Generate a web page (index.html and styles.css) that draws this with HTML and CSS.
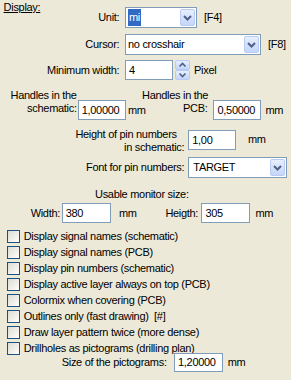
FILE: index.html
```html
<!DOCTYPE html>
<html lang="en">
<head>
    <meta charset="UTF-8">
    <meta name="viewport" content="width=device-width, initial-scale=1.0">
    <title>Display</title>
    <link rel="stylesheet" href="styles.css">
</head>
<body>
    <div class="panel">
        <div class="row row-unit">
            <div class="label label-unit">
                <span class="title">Display:</span>
                <span>Unit:</span>
            </div>
            <div class="combo combo-unit">
                <span class="combo-value"><span class="selected">mi</span></span>
                <span class="drop"><svg width="15" height="17" viewBox="0 0 15 17"><polyline points="4,7 7.5,10.5 11,7" fill="none" stroke="#4d6185" stroke-width="2"/></svg></span>
            </div>
            <span class="key">[F4]</span>
        </div>

        <div class="row row-cursor">
            <div class="label label-main">Cursor:</div>
            <div class="combo combo-cursor">
                <span class="combo-value">no crosshair</span>
                <span class="drop"><svg width="15" height="17" viewBox="0 0 15 17"><polyline points="4,7 7.5,10.5 11,7" fill="none" stroke="#4d6185" stroke-width="2"/></svg></span>
            </div>
            <span class="key">[F8]</span>
        </div>

        <div class="row row-minwidth">
            <div class="label label-main">Minimum width:</div>
            <div class="edit edit-min">4</div>
            <div class="spinner">
                <span class="spin"><svg width="15" height="10" viewBox="0 0 15 10"><polyline points="4.5,6.5 7.5,3.5 10.5,6.5" fill="none" stroke="#4d6185" stroke-width="1.6"/></svg></span>
                <span class="spin"><svg width="15" height="10" viewBox="0 0 15 10"><polyline points="4.5,3.5 7.5,6.5 10.5,3.5" fill="none" stroke="#4d6185" stroke-width="1.6"/></svg></span>
            </div>
            <span class="pixel">Pixel</span>
        </div>

        <div class="row row-handles">
            <div class="label handles-sch">
                <div>Handles in the</div>
                <div>schematic:</div>
            </div>
            <div class="field">
                <div class="edit edit-num">1,00000</div>
                <span class="mm mm-sch">mm</span>
            </div>
            <div class="label handles-pcb">
                <div>Handles in the</div>
                <div class="pcb">PCB:</div>
            </div>
            <div class="field">
                <div class="edit edit-num">0,50000</div>
                <span class="mm mm-pcb">mm</span>
            </div>
        </div>

        <div class="row row-pinheight">
            <div class="label label-pin">
                <div class="pin-line1">Height of pin numbers</div>
                <div class="pin-line2">in schematic:</div>
            </div>
            <div class="edit edit-pin">1,00</div>
            <span class="mm mm-pin">mm</span>
        </div>

        <div class="row row-font">
            <div class="label label-font">Font for pin numbers:</div>
            <div class="combo combo-font">
                <span class="combo-value">TARGET</span>
                <span class="drop"><svg width="15" height="17" viewBox="0 0 15 17"><polyline points="4,7 7.5,10.5 11,7" fill="none" stroke="#4d6185" stroke-width="2"/></svg></span>
            </div>
        </div>

        <div class="monitor-title">Usable monitor size:</div>

        <div class="row row-monitor">
            <div class="label label-width">Width:</div>
            <div class="edit edit-mon">380</div>
            <span class="mm mm-width">mm</span>
            <span class="label-height">Heigth:</span>
            <div class="edit edit-mon">305</div>
            <span class="mm mm-height">mm</span>
        </div>

        <ul class="checks">
            <li><span class="check"></span>Display signal names (schematic)</li>
            <li><span class="check"></span>Display signal names (PCB)</li>
            <li><span class="check"></span>Display pin numbers (schematic)</li>
            <li><span class="check"></span>Display active layer always on top (PCB)</li>
            <li><span class="check"></span>Colormix when covering (PCB)</li>
            <li><span class="check"></span>Outlines only (fast drawing)&nbsp; [#]</li>
            <li><span class="check"></span>Draw layer pattern twice (more dense)</li>
            <li><span class="check"></span>Drillholes as pictograms (drilling plan)</li>
        </ul>

        <div class="row row-picto">
            <div class="label label-picto">Size of the pictograms:</div>
            <div class="edit edit-mon edit-picto">1,20000</div>
            <span class="mm mm-picto">mm</span>
        </div>
    </div>
</body>
</html>
```

FILE: styles.css
```css
* {
    padding: 0;
    margin: 0;
    box-sizing: border-box;
}
ul {
    list-style: none;
}
body {
    width: 291px;
    height: 380px;
    overflow: hidden;
    background: #ece9d8;
    color: #000;
    font: 11px/13px "Liberation Sans", Arial, sans-serif;
    letter-spacing: -0.3px;
}
.panel {
    padding-top: 7px;
}
.row {
    display: flex;
    align-items: center;
}
.label {
    flex-shrink: 0;
    white-space: nowrap;
}

/* inputs */
.edit {
    height: 20px;
    width: 48px;
    flex-shrink: 0;
    padding-left: 3px;
    background: #fff;
    border: 1px solid #7f9db9;
    display: flex;
    align-items: center;
    white-space: nowrap;
}
.combo {
    height: 21px;
    flex-shrink: 0;
    display: flex;
    align-items: center;
    background: #fff;
    border: 1px solid #7f9db9;
    padding: 1px;
}
.combo-value {
    flex: 1;
    padding-left: 2px;
    white-space: nowrap;
    overflow: hidden;
}
.selected {
    display: inline-block;
    background: #316ac5;
    color: #fff;
    padding: 2px 1px;
    margin-left: -1px;
}
.drop {
    width: 15px;
    height: 17px;
    display: block;
    border: 1px solid #b9cbf3;
    border-radius: 2px;
    background: linear-gradient(#e8effd, #c3d5fa);
}
.drop svg {
    display: block;
    margin: -1px;
}
.key {
    margin-left: 7px;
}

/* unit row */
.row-unit {
    height: 21px;
}
.label-unit {
    width: 125px;
    align-self: stretch;
    display: flex;
    justify-content: space-between;
    align-items: center;
    padding: 0 5.7px 0 3.6px;
}
.title {
    text-decoration: underline;
    align-self: flex-start;
    margin-top: -6px;
}
.combo-unit {
    width: 72px;
}

/* cursor row */
.row-cursor {
    height: 21px;
    margin-top: 6px;
}
.label-main {
    width: 125px;
    text-align: right;
    padding-right: 5.7px;
}
.combo-cursor {
    width: 136px;
}
.combo-cursor .combo-value {
    padding-left: 1px;
}

/* minimum width row */
.row-minwidth {
    height: 20px;
    margin-top: 5px;
}
.spinner {
    margin-left: 1.5px;
    width: 15px;
    height: 20px;
    display: flex;
    flex-direction: column;
}
.spin {
    display: block;
    height: 10px;
    border: 1px solid #b9cbf3;
    border-radius: 2px;
    background: linear-gradient(#e8effd, #c3d5fa);
}
.spin svg {
    display: block;
    margin: -1px;
}
.pixel {
    margin-left: 4.5px;
}

/* handles row */
.row-handles {
    height: 32px;
    margin-top: 8px;
    align-items: flex-end;
}
.handles-sch {
    width: 77.7px;
    text-align: right;
    padding-right: 1px;
    padding-bottom: 5.5px;
}
.field {
    display: flex;
    align-items: center;
    height: 20px;
}
.mm-sch {
    margin-left: 2.3px;
    width: 14px;
}
.handles-pcb {
    width: 71.5px;
    padding-bottom: 5.5px;
}
.pcb {
    padding-left: 41px;
}
.mm-pcb {
    margin-left: 4px;
}

/* pin height row */
.row-pinheight {
    height: 26px;
    margin-top: 8px;
    align-items: flex-start;
}
.label-pin {
    width: 188.3px;
    text-align: right;
}
.pin-line1 {
    padding-right: 11.6px;
}
.pin-line2 {
    padding-right: 4px;
}
.edit-pin {
    margin-top: 2px;
}
.mm-pin {
    margin-left: 11.6px;
    margin-top: 5px;
}

/* font row */
.row-font {
    height: 21px;
    margin-top: 3px;
}
.label-font {
    width: 188.3px;
    text-align: right;
    padding-right: 4px;
}
.combo-font {
    width: 99px;
}
.combo-font .combo-value {
    padding-left: 3px;
}

/* monitor size */
.monitor-title {
    margin-top: 9.5px;
    padding-left: 95px;
}
.row-monitor {
    height: 20px;
    margin-top: 2.7px;
}
.label-width {
    width: 61.7px;
    text-align: right;
    padding-right: 1.7px;
}
.edit-mon {
    width: 49px;
}
.mm-width {
    margin-left: 8.3px;
    width: 46.4px;
}
.label-height {
    width: 36px;
}
.mm-height {
    margin-left: 5px;
}

/* checkboxes */
.checks {
    margin-top: 5.7px;
}
.checks li {
    height: 16px;
    display: flex;
    align-items: center;
    padding-left: 7px;
    white-space: nowrap;
}
.check {
    width: 13px;
    height: 13px;
    margin-right: 3.7px;
    flex-shrink: 0;
    border: 1px solid #1c5180;
    background: linear-gradient(135deg, #dcdbd5, #f4f3ee 70%, #fff);
}

/* pictograms */
.row-picto {
    height: 19px;
    margin-top: -4px;
}
.edit-picto {
    height: 19px;
}
.label-picto {
    width: 174px;
    text-align: right;
    padding-right: 7.3px;
}
.mm-picto {
    margin-left: 4.7px;
}
```
